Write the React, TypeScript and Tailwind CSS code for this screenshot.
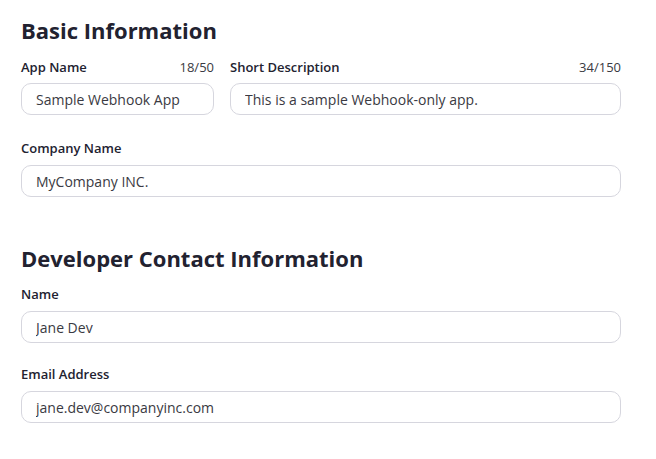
export default function App() {
  const inputCls =
    "w-full h-[32px] rounded-[10px] border border-[#d6d6de] bg-white px-[14px] text-[14px] text-[#3a3a42] outline-none";
  const labelCls = "text-[13px] font-semibold leading-[16px] text-[#222230]";

  return (
    <div
      className="w-[656px] h-[459px] bg-white px-[21px] pt-[16px]"
      style={{ fontFamily: '"Open Sans", "Noto Sans", sans-serif' }}
    >
      <div className="w-[600px]">
        <h2 className="text-[22px] font-bold leading-[28px] text-[#222230]">Basic Information</h2>

        <div className="mt-[15px] flex gap-[16px]">
          <div className="w-[193px]">
            <div className="flex items-center justify-between">
              <span className={labelCls}>App Name</span>
              <span className="text-[13px] leading-[16px] text-[#3a3a42]">18/50</span>
            </div>
            <input className={`${inputCls} mt-[8px]`} defaultValue="Sample Webhook App" />
          </div>
          <div className="flex-1">
            <div className="flex items-center justify-between">
              <span className={labelCls}>Short Description</span>
              <span className="text-[13px] leading-[16px] text-[#3a3a42]">34/150</span>
            </div>
            <input className={`${inputCls} mt-[8px]`} defaultValue="This is a sample Webhook-only app." />
          </div>
        </div>

        <div className="mt-[25px]">
          <div className={labelCls}>Company Name</div>
          <input className={`${inputCls} mt-[9px]`} defaultValue="MyCompany INC." />
        </div>

        <h2 className="mt-[47px] text-[22px] font-bold leading-[28px] text-[#222230]">
          Developer Contact Information
        </h2>

        <div className="mt-[14px]">
          <div className={labelCls}>Name</div>
          <input className={`${inputCls} mt-[9px]`} defaultValue="Jane Dev" />
        </div>

        <div className="mt-[23px]">
          <div className={labelCls}>Email Address</div>
          <input className={`${inputCls} mt-[9px]`} defaultValue="jane.dev@companyinc.com" />
        </div>
      </div>
    </div>
  );
}
